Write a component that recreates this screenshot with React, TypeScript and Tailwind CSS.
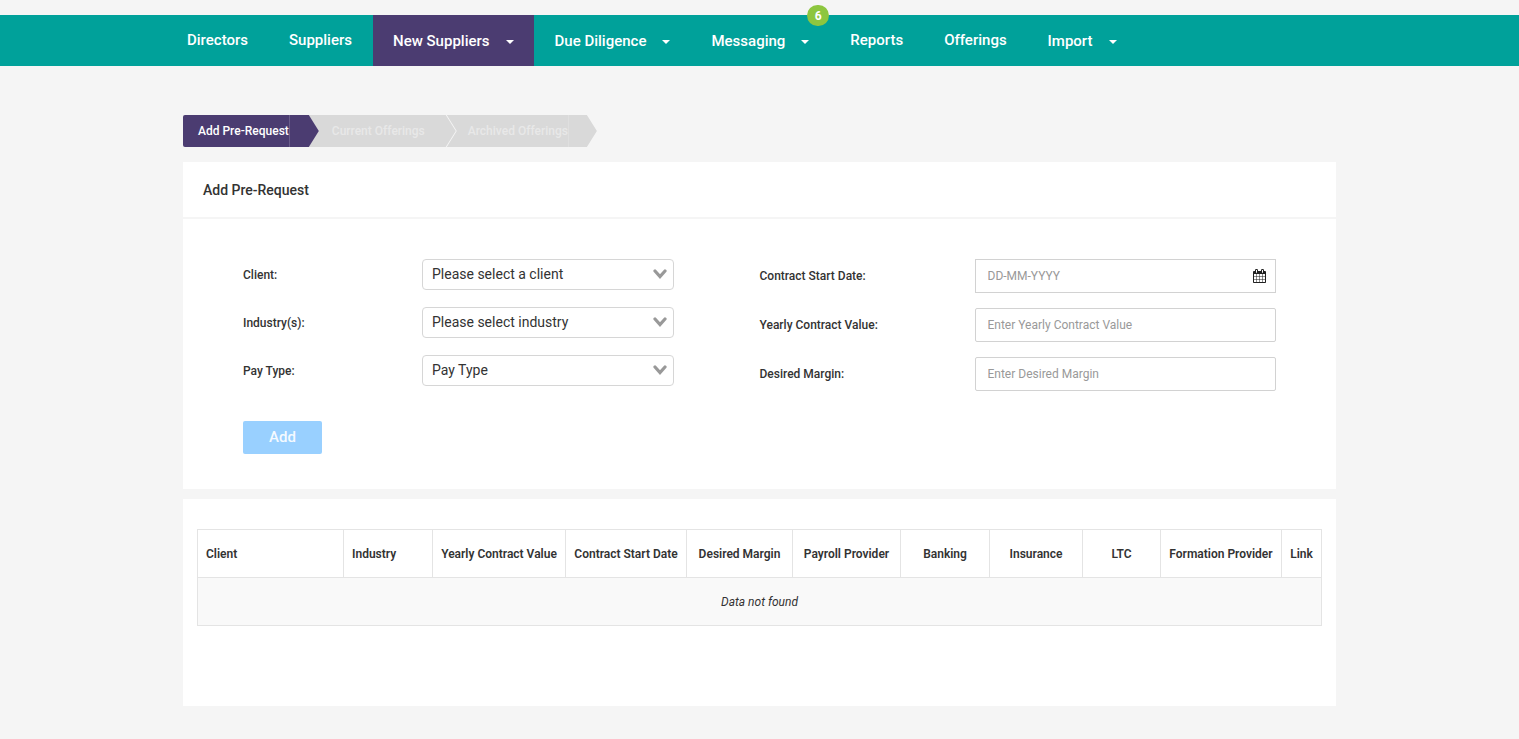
import { useId, type ReactNode } from "react";

type NavEntry = { label: string; menu?: boolean; active?: boolean; badge?: number };

const NAV: NavEntry[] = [
  { label: "Directors" },
  { label: "Suppliers" },
  { label: "New Suppliers", menu: true, active: true },
  { label: "Due Diligence", menu: true },
  { label: "Messaging", menu: true, badge: 6 },
  { label: "Reports" },
  { label: "Offerings" },
  { label: "Import", menu: true },
];

function NavItem({ label, menu, active, badge }: NavEntry) {
  const tone = active ? "bg-[#4b3c71]" : "";
  if (!menu) {
    return (
      <li className="flex">
        <a href="#" className={`flex items-center px-5 ${tone}`}>
          {label}
        </a>
      </li>
    );
  }
  return (
    <li className="relative flex">
      <button type="button" className={`flex items-center gap-4 px-5 pt-0.5 ${tone}`}>
        {label}
        <svg viewBox="0 0 8 4" className="h-1 w-2 fill-current" aria-hidden="true">
          <path d="M0 0h8L4 4z" />
        </svg>
      </button>
      {badge !== undefined && (
        <span className="absolute -top-2.5 right-0 flex h-[21px] w-[22px] items-center justify-center rounded-full bg-[#8dc63f] text-xs font-bold">
          {badge}
        </span>
      )}
    </li>
  );
}

function Steps() {
  return (
    <nav aria-label="Offering steps">
      <ol className="flex text-xs leading-8">
        <li className="relative z-10 rounded-l-xs bg-[#4b3c71] pl-[15px] pr-[29px] font-medium text-white [clip-path:polygon(0_0,calc(100%-10px)_0,100%_50%,calc(100%-10px)_100%,0_100%)]">
          <a href="#" aria-current="step" className="block border-r border-[#6a5d8a]">
            Add Pre-Request
          </a>
        </li>
        <li className="-ml-2.5 bg-[#d9d9d9] pl-[23px] pr-[31px] font-medium text-[#e8e8e8] [clip-path:polygon(0_0,calc(100%-10px)_0,100%_50%,calc(100%-10px)_100%,0_100%)]">
          <a href="#">Current Offerings</a>
        </li>
        <li className="-ml-[9px] bg-[#d9d9d9] pl-[21px] pr-7 font-medium text-[#e8e8e8] [clip-path:polygon(0_0,calc(100%-10px)_0,100%_50%,calc(100%-10px)_100%,0_100%,10px_50%)]">
          <a href="#" className="block border-r border-[#dfdfdf]">
            Archived Offerings
          </a>
        </li>
      </ol>
    </nav>
  );
}

function SelectField({ label, placeholder }: { label: string; placeholder: string }) {
  const id = useId();
  return (
    <div className="flex items-center">
      <label htmlFor={id} className="w-[179px] shrink-0">
        {label}
      </label>
      <div className="relative flex-1">
        <select
          id={id}
          defaultValue=""
          className="block h-[31px] w-full appearance-none rounded border border-[#d6d6d6] bg-white pb-0.5 pl-[9px] pr-8 text-sm font-normal text-[#333]"
        >
          <option value="">{placeholder}</option>
        </select>
        <svg
          viewBox="0 0 14 10"
          className="pointer-events-none absolute right-[7px] top-2.5 h-2.5 w-3.5"
          fill="none"
          stroke="#999"
          strokeWidth="3.2"
          strokeLinecap="round"
          aria-hidden="true"
        >
          <path d="M2 2l5 5.6L12 2" />
        </svg>
      </div>
    </div>
  );
}

function TextField({
  label,
  placeholder,
  square,
  children,
}: {
  label: string;
  placeholder: string;
  square?: boolean;
  children?: ReactNode;
}) {
  const id = useId();
  return (
    <div className="flex items-center">
      <label htmlFor={id} className="w-[215px] shrink-0">
        {label}
      </label>
      <div className="relative flex-1">
        <input
          id={id}
          type="text"
          placeholder={placeholder}
          className={`block h-[34px] w-full border border-[#d2d2d2] bg-white px-3 text-xs font-normal text-[#333] placeholder:text-[#999] ${square ? "" : "rounded-xs"}`}
        />
        {children}
      </div>
    </div>
  );
}

function CalendarIcon() {
  return (
    <svg
      viewBox="0 0 1664 1792"
      className="pointer-events-none absolute right-2.5 top-2.5 h-3.5 w-[13px] fill-[#222]"
      aria-hidden="true"
    >
      <path d="M128 1664h288v-288h-288v288zm352 0h320v-288h-320v288zm-352-352h288v-320h-288v320zm352 0h320v-320h-320v320zm-352-384h288v-288h-288v288zm736 736h320v-288h-320v288zm-384-736h320v-288h-320v288zm768 736h288v-288h-288v288zm-384-352h320v-320h-320v320zm-352-864v-288q0-13-9.5-22.5t-22.5-9.5h-64q-13 0-22.5 9.5t-9.5 22.5v288q0 13 9.5 22.5t22.5 9.5h64q13 0 22.5-9.5t9.5-22.5zm736 864h288v-320h-288v320zm-384-384h320v-288h-320v288zm384 0h288v-288h-288v288zm32-480v-288q0-13-9.5-22.5t-22.5-9.5h-64q-13 0-22.5 9.5t-9.5 22.5v288q0 13 9.5 22.5t22.5 9.5h64q13 0 22.5-9.5t9.5-22.5zm384-64v1280q0 52-38 90t-90 38h-1408q-52 0-90-38t-38-90v-1280q0-52 38-90t90-38h128v-96q0-66 47-113t113-47h64q66 0 113 47t47 113v96h384v-96q0-66 47-113t113-47h64q66 0 113 47t47 113v96h128q52 0 90 38t38 90z" />
    </svg>
  );
}

const COLUMNS = [
  { label: "Client", style: "w-[146px] text-left" },
  { label: "Industry", style: "w-[89px] text-left" },
  { label: "Yearly Contract Value", style: "w-[133px]" },
  { label: "Contract Start Date", style: "w-[121px]" },
  { label: "Desired Margin", style: "w-[106px]" },
  { label: "Payroll Provider", style: "w-[108px]" },
  { label: "Banking", style: "w-[89px]" },
  { label: "Insurance", style: "w-[93px]" },
  { label: "LTC", style: "w-[78px]" },
  { label: "Formation Provider", style: "w-[121px]" },
  { label: "Link", style: "w-[40px]" },
];

export default function App() {
  return (
    <div className="min-h-screen bg-[#f5f5f5] pb-8 pt-[15px] font-[Roboto,sans-serif] text-xs text-[#333]">
      <header className="bg-[#00a19a]">
        <nav aria-label="Main" className="mx-auto max-w-[1185px]">
          <ul className="flex h-[51px] gap-px text-[15px] font-medium text-white">
            {NAV.map((entry) => (
              <NavItem key={entry.label} {...entry} />
            ))}
          </ul>
        </nav>
      </header>

      <main className="mx-auto max-w-[1153px] pt-[49px]">
        <Steps />

        <section className="mt-[15px] bg-white">
          <h1 className="border-b-2 border-[#f5f5f5] px-5 pt-0.5 text-sm font-medium leading-[53px]">
            Add Pre-Request
          </h1>
          <form className="px-[60px] pb-[35px] pt-10 font-medium">
            <div className="grid grid-cols-2">
              <div className="flex flex-col gap-[17px] pr-[86px]">
                <SelectField label="Client:" placeholder="Please select a client" />
                <SelectField label="Industry(s):" placeholder="Please select industry" />
                <SelectField label="Pay Type:" placeholder="Pay Type" />
              </div>
              <div className="flex flex-col gap-[15px]">
                <TextField label="Contract Start Date:" placeholder="DD-MM-YYYY" square>
                  <CalendarIcon />
                </TextField>
                <TextField label="Yearly Contract Value:" placeholder="Enter Yearly Contract Value" />
                <TextField label="Desired Margin:" placeholder="Enter Desired Margin" />
              </div>
            </div>
            <button
              type="button"
              className="mt-[30px] block h-[33px] w-[79px] rounded-xs bg-[#99d0ff] text-[15px] font-medium text-[#f5faff]"
            >
              Add
            </button>
          </form>
        </section>

        <section className="mt-2.5 bg-white px-3.5 pb-20 pt-[30px]">
          <table className="w-full table-fixed border-collapse border border-[#e4e4e4]">
            <thead>
              <tr className="h-12">
                {COLUMNS.map(({ label, style }) => (
                  <th
                    key={label}
                    scope="col"
                    className={`whitespace-nowrap border border-[#e4e4e4] px-2 font-semibold ${style}`}
                  >
                    {label}
                  </th>
                ))}
              </tr>
            </thead>
            <tbody>
              <tr className="h-12 bg-[#f9f9f9]">
                <td colSpan={COLUMNS.length} className="border border-[#e4e4e4] text-center italic">
                  Data not found
                </td>
              </tr>
            </tbody>
          </table>
        </section>
      </main>
    </div>
  );
}
